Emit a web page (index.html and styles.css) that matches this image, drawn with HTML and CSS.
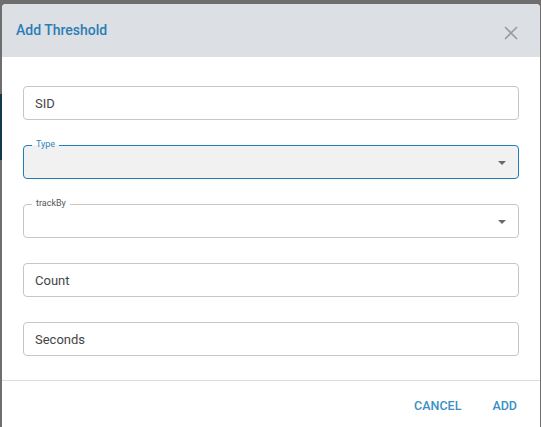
FILE: index.html
```html
<!DOCTYPE html>
<html>
<head>
<meta charset="utf-8">
<link rel="stylesheet" href="styles.css">
</head>
<body>
<div class="backdrop">
  <div class="stripe"></div>
  <div class="dialog">
    <div class="header">
      <h2 class="title">Add Threshold</h2>
      <svg class="close" width="14" height="14" viewBox="0 0 14 14"><path d="M1 1L13 13M13 1L1 13" stroke="#9a9a9a" stroke-width="1.6" fill="none"/></svg>
    </div>
    <div class="body">
      <div class="field"><span class="placeholder">SID</span></div>
      <div class="field outlined focused">
        <span class="label">Type</span>
        <span class="arrow"></span>
      </div>
      <div class="field outlined">
        <span class="label">trackBy</span>
        <span class="arrow"></span>
      </div>
      <div class="field"><span class="placeholder">Count</span></div>
      <div class="field"><span class="placeholder">Seconds</span></div>
    </div>
    <div class="footer">
      <button class="btn">CANCEL</button>
      <button class="btn">ADD</button>
    </div>
  </div>
</div>
</body>
</html>
```
FILE: styles.css
```css
html, body {
  margin: 0;
  padding: 0;
  width: 541px;
  height: 427px;
  overflow: hidden;
  font-family: Roboto, "Noto Sans", sans-serif;
}
.backdrop {
  width: 541px;
  height: 427px;
  background: #6e6e6e;
  display: flex;
  padding-top: 4px;
  box-sizing: border-box;
  position: relative;
}
.stripe {
  position: absolute;
  left: 0;
  top: 94px;
  width: 2px;
  height: 66px;
  background: #12394a;
}
.dialog {
  margin-left: 2px;
  width: 538px;
  height: 440px;
  background: #fff;
  border-radius: 4px 4px 0 0;
  overflow: hidden;
  display: flex;
  flex-direction: column;
}
.header {
  height: 53px;
  flex: none;
  background: #dce0e4;
  display: flex;
  align-items: center;
  justify-content: space-between;
  padding: 0 22px 0 14px;
}
.title {
  margin: 0;
  font-size: 14px;
  font-weight: 500;
  color: #2b7db5;
  margin-top: -2px;
}
.close {
  margin-top: 4px;
}
.body {
  height: 324px;
  flex: none;
  box-sizing: border-box;
  padding: 29px 21px 0 21px;
  display: flex;
  flex-direction: column;
  gap: 25px;
  border-bottom: 1px solid #dcdcdc;
}
.field {
  position: relative;
  height: 34px;
  box-sizing: border-box;
  border: 1px solid #c6c6c6;
  border-radius: 4px;
  display: flex;
  align-items: center;
  padding-left: 11px;
}
.placeholder {
  font-size: 13px;
  color: #454545;
}
.field.focused {
  border-color: #1f7db8;
  background: #f1f1f1;
}
.label {
  position: absolute;
  left: 8px;
  top: -7px;
  padding: 0 4px;
  font-size: 9px;
  line-height: 11px;
  color: #555;
  background: #fff;
}
.focused .label {
  color: #2b86bf;
  background: linear-gradient(#fff 0 6px, #f1f1f1 6px);
}
.arrow {
  position: absolute;
  right: 12px;
  top: 15px;
  width: 0;
  height: 0;
  border-left: 4.5px solid transparent;
  border-right: 4.5px solid transparent;
  border-top: 4.5px solid #6a6a6a;
}
.footer {
  display: flex;
  justify-content: flex-end;
  gap: 31px;
  padding: 17px 23px 0 0;
}
.btn {
  border: none;
  background: none;
  padding: 0;
  font-family: Roboto, sans-serif;
  font-size: 12.5px;
  font-weight: 500;
  color: #3a8fc4;
  letter-spacing: 0;
}
```
